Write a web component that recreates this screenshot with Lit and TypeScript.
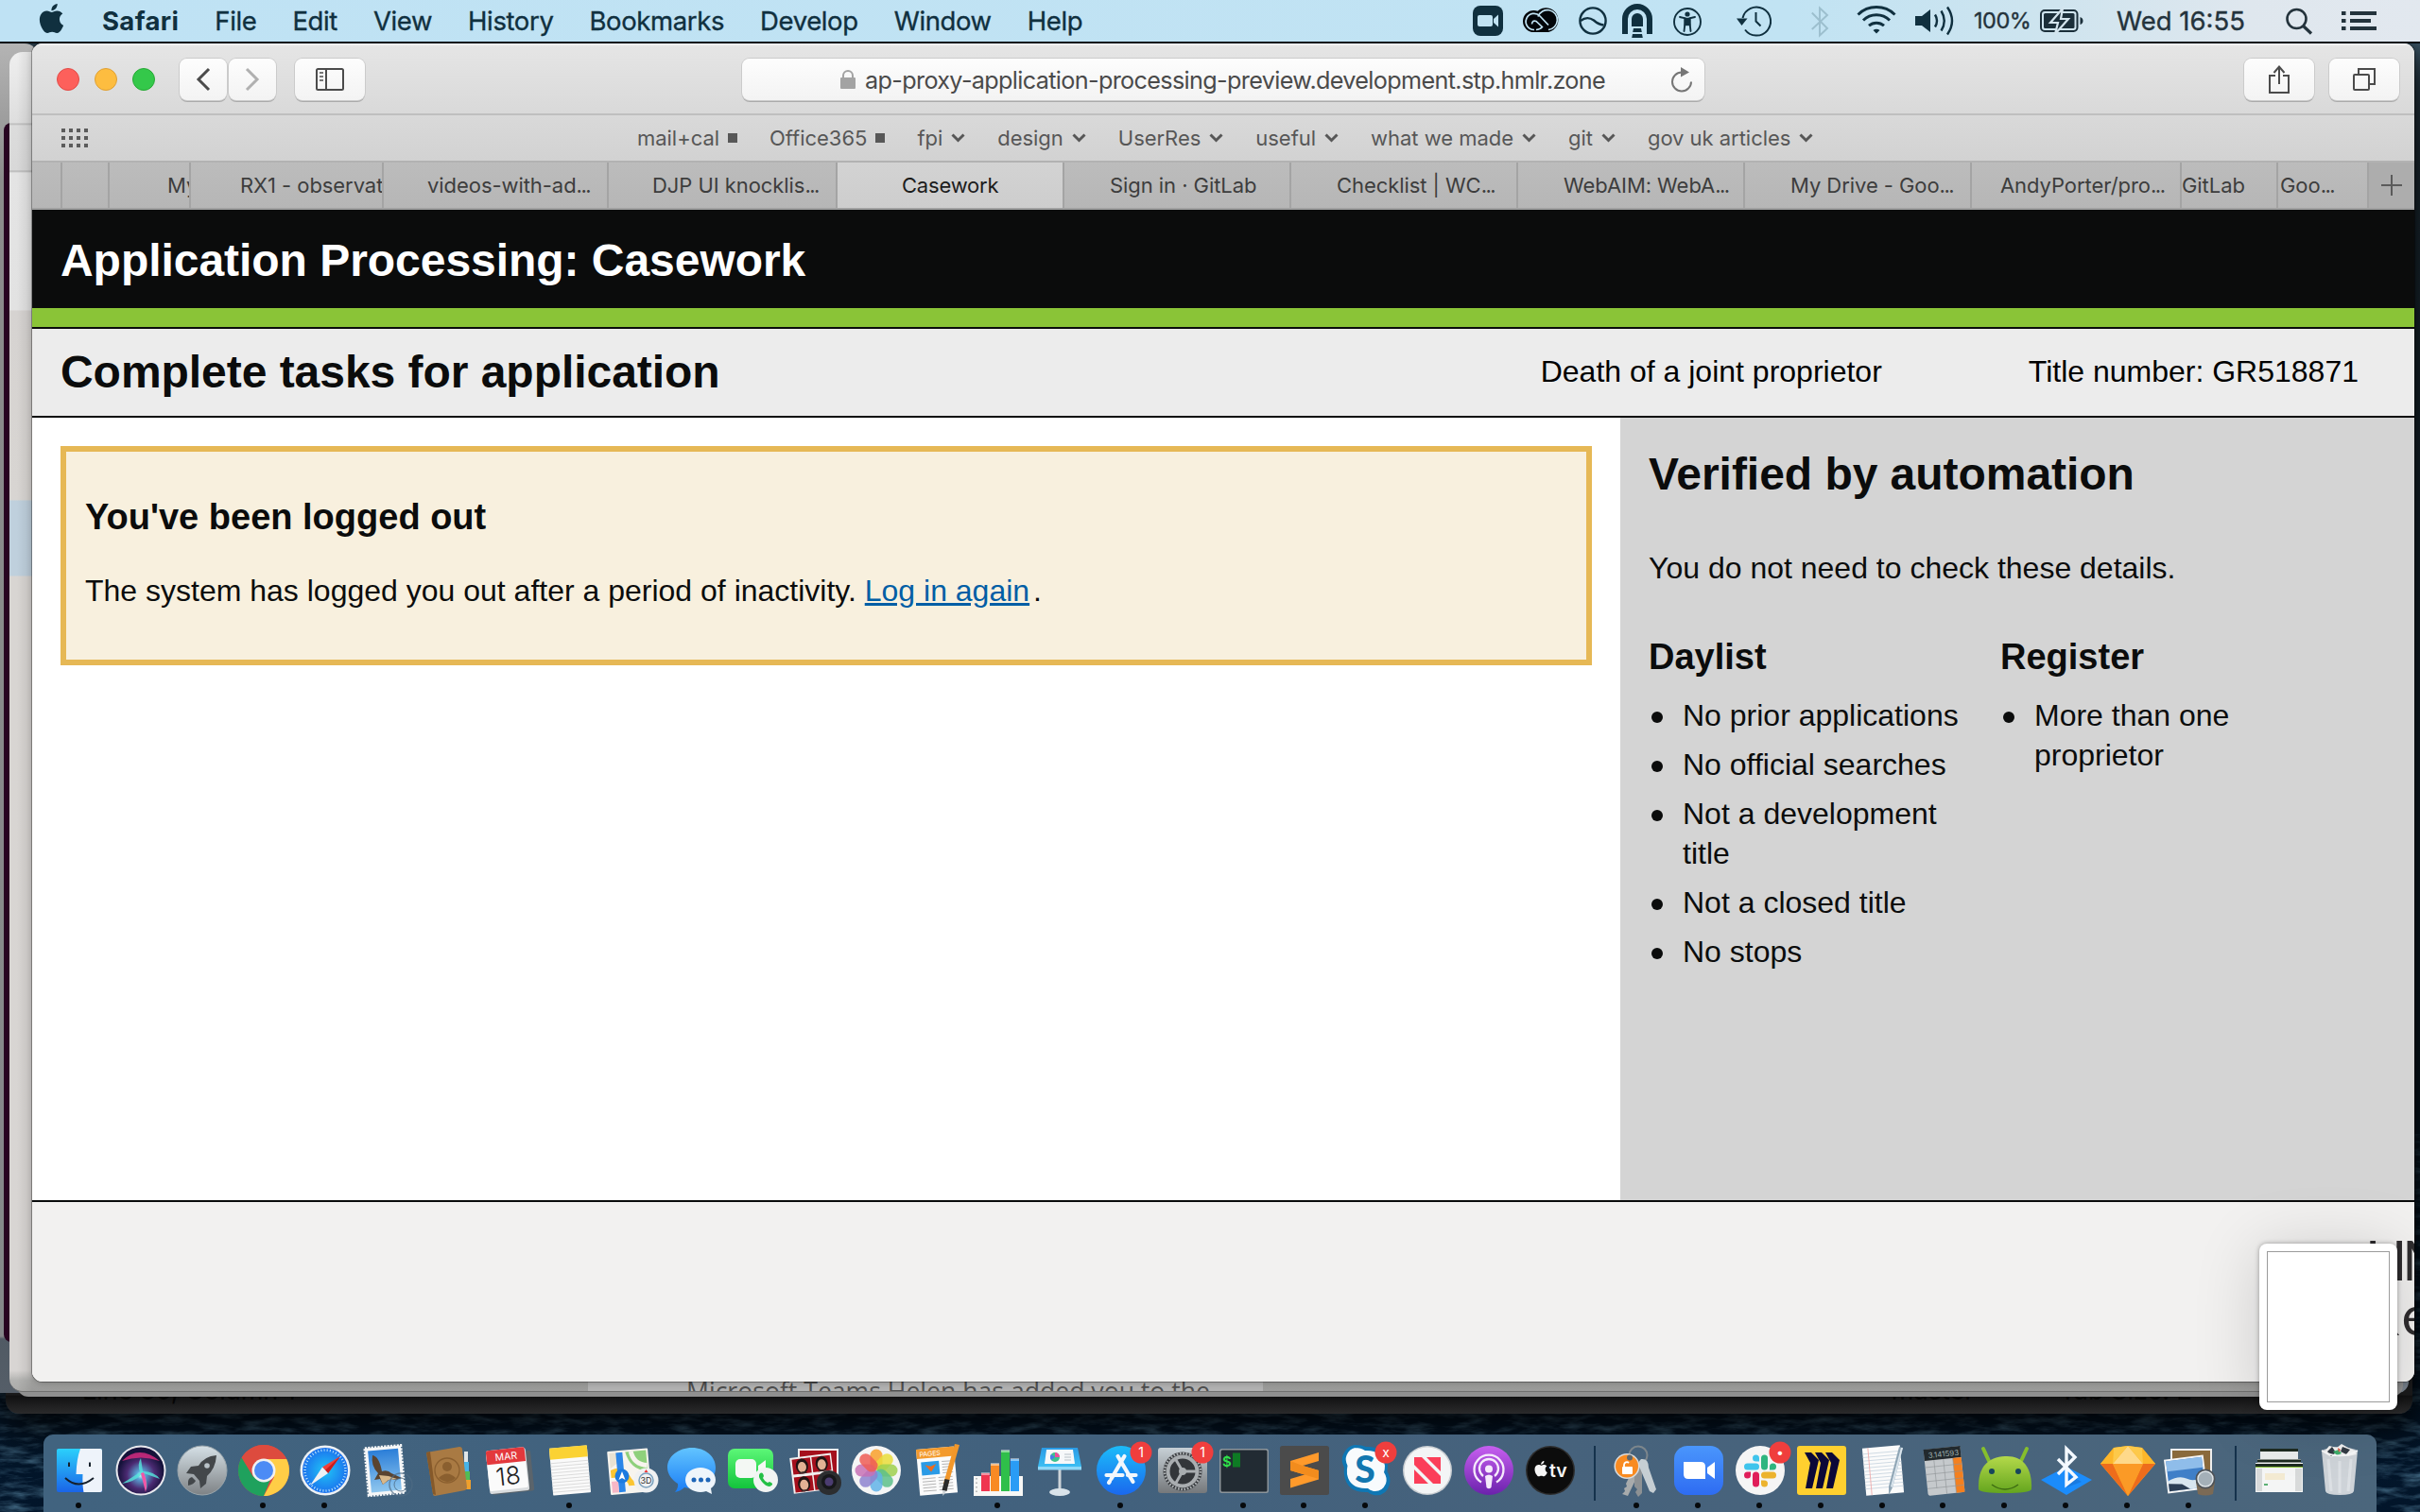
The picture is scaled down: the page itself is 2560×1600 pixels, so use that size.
import { LitElement, html, svg, css, nothing } from "lit";
import { customElement, property } from "lit/decorators.js";

const APPLE =
  "M12.152 6.896c-.948 0-2.415-1.078-3.96-1.04-2.04.027-3.91 1.183-4.961 3.014-2.117 3.675-.546 9.103 1.519 12.09 1.013 1.454 2.208 3.09 3.792 3.039 1.52-.065 2.09-.987 3.935-.987 1.831 0 2.35.987 3.96.948 1.637-.026 2.676-1.48 3.676-2.948 1.156-1.688 1.636-3.325 1.662-3.415-.039-.013-3.182-1.221-3.22-4.857-.026-3.04 2.48-4.494 2.597-4.559-1.429-2.09-3.623-2.324-4.39-2.376-2-.156-3.675 1.09-4.61 1.09zM15.53 3.83c.843-1.012 1.4-2.427 1.245-3.83-1.207.052-2.662.805-3.532 1.818-.78.896-1.454 2.338-1.273 3.714 1.338.104 2.715-.688 3.559-1.701";

/* ---------- menu bar ---------- */

@customElement("menu-bar")
class MenuBar extends LitElement {
  static styles = css`
    :host {
      display: flex;
      height: 44px;
      background: linear-gradient(90deg, #bfe2f4 0%, #c1e3f3 74%, #cde4ef 84%, #dfe7ee 93%, #e2e8ef 100%);
      border-bottom: 2px solid #020a12;
      color: #10303f;
      font: 500 27.5px/44px "Inter", "Liberation Sans", sans-serif;
      white-space: nowrap;
    }
    .apple { width: 31px; height: 31px; margin: 4px 0 0 39px; }
    .menus { display: flex; gap: 38px; margin-left: 38px; width: 1450px; font-weight: 400; letter-spacing: -0.38px; -webkit-text-stroke: 0.35px #10303f; }
    .app { font-weight: 700; letter-spacing: 0.35px; -webkit-text-stroke: 0; }
    .status {
      display: grid;
      grid-template-columns: 53px 59px 46px 54px 67px 79px 48px 62px 62px 70px 81px 179px 59px 37px;
      font-weight: 400;
      -webkit-text-stroke: 0.35px #24333c;
      color: #24333c;
    }
    .status svg { display: block; height: 44px; }
    .pct { font-size: 23.5px; letter-spacing: -0.5px; }
    .clock { letter-spacing: 0; }
  `;
  render() {
    const ink = "#10303f";
    return html`
      <svg class="apple" viewBox="0 0 24 24" fill=${ink}><path d=${APPLE} /></svg>
      <div class="menus">
        <span class="app">Safari</span>
        ${["File", "Edit", "View", "History", "Bookmarks", "Develop", "Window", "Help"].map((m) => html`<span>${m}</span>`)}
      </div>
      <div class="status">
        <svg width="32" viewBox="0 0 32 44">
          <rect y="6" width="32" height="32" rx="8" fill=${ink} />
          <rect x="5" y="16" width="16" height="12" rx="2" fill="#c1e3f3" />
          <path d="M22 20l5-4.500v13l-5-4.500z" fill="#c1e3f3" />
        </svg>
        <svg width="39" viewBox="0 0 39 44" fill="none" stroke="#020509">
          <path d="M11.500 34A11 11 0 0 1 11.500 11q2.500 0 4 .8A13 13 0 1 1 27 34z" fill="#020509" stroke="none" />
          <path d="M12 31.500A8.600 8.600 0 1 1 18 17l9 9.500" stroke="#c1e3f3" stroke-width="1.700" />
          <path d="M27 31.500A10.500 10.500 0 1 0 16 17.500" stroke="#c1e3f3" stroke-width="1.700" />
          <path d="M14 31.500q4 0 7-3.500M9.500 25.500q.5-4.500 4.500-3l7 6.500" stroke="#c1e3f3" stroke-width="1.700" />
        </svg>
        <svg width="30" viewBox="0 0 30 44" fill="none" stroke=${ink} stroke-width="2.400">
          <circle cx="15" cy="22" r="13.600" />
          <path d="M2 22q7-5.500 14-.5 5 4.500 10.500 5" />
        </svg>
        <svg width="32" viewBox="0 0 32 44" fill=${ink}>
          <path d="M0 36V20a16 16 0 0 1 32 0v16h-6V20a10 10 0 0 0-20 0v16z" />
          <path d="M10 28v-8a6 6 0 0 1 12 0v8zM12 30h8l.8 4h-9.600zM11 36h10l.8 4H10.200z" />
        </svg>
        <svg width="30" viewBox="0 0 30 44" fill="none" stroke=${ink} stroke-width="1.900">
          <circle cx="15" cy="23" r="14" />
          <circle cx="15" cy="15" r="2.600" fill=${ink} stroke="none" />
          <path d="M7 18l5.500 1.300v5L11.500 33M23 18l-5.500 1.300v5l1 8.700" stroke-linecap="round" />
          <path d="M11.500 18.800h7v8.400h-7z" fill=${ink} stroke="none" />
        </svg>
        <svg width="37" viewBox="0 0 37 44" fill="none" stroke=${ink} stroke-width="2">
          <path d="M6.500 19A15 15 0 1 1 9 31.500" />
          <path d="M20.500 13v9.500l5 5" />
          <path d="M0 19.500h11.500L5.500 27z" fill=${ink} stroke="none" />
        </svg>
        <svg width="19" viewBox="0 0 19 44" fill="none" stroke="#9cbfce" stroke-width="1.900">
          <path d="M.8 13.500L17 30l-8 7.500v-29l8 7.500L.8 31" />
        </svg>
        <svg width="43" viewBox="0 0 43 44" fill="none" stroke=${ink} stroke-width="3">
          <path d="M1.500 15.500a28 28 0 0 1 39 0M7 21.500a20 20 0 0 1 28 0M13 27.200a12 12 0 0 1 16 0" />
          <path d="M17.500 32q3.500-2.500 7 0L21 35.500z" fill=${ink} stroke="none" />
        </svg>
        <svg width="42" viewBox="0 0 42 44" fill="none" stroke=${ink} stroke-width="2.400">
          <path d="M0 17h7l9-7v24l-9-7H0z" fill=${ink} stroke="none" />
          <path d="M21 15.500q4 6.500 0 13M27.500 11.500q6.500 10.500 0 21M34 7.500q10 14.500 0 29" />
        </svg>
        <span class="pct">100%</span>
        <svg width="48" viewBox="0 0 48 44" fill="none" stroke="#1b2f3a" stroke-width="2">
          <rect x="1" y="11" width="38.500" height="22" rx="4" />
          <rect x="4" y="14" width="32.500" height="16" rx="1.500" fill="#1b2f3a" stroke="none" />
          <path d="M42.500 18q3 1 3 4t-3 4z" fill="#1b2f3a" stroke="none" />
          <path d="M24 9L11 24h8l-3 12L30 20h-8z" fill="#1b2f3a" stroke="#d4e5ee" stroke-width="2.200" />
        </svg>
        <span class="clock">Wed 16:55</span>
        <svg width="30" viewBox="0 0 30 44" fill="none" stroke="#24333c" stroke-width="2.600">
          <circle cx="11.500" cy="20" r="10" /><path d="M18.500 27.500l8.500 8" stroke-width="3.200" />
        </svg>
        <svg width="38" viewBox="0 0 38 44" fill="#24333c">
          <path d="M0 12h4.500v4H0zM0 20h4.500v4H0zM0 28h4.500v4H0zM9 12h28v4H9zM9 20h22v4H9zM9 28h28v4H9z" />
        </svg>
      </div>
    `;
  }
}

/* ---------- Safari chrome ---------- */

interface Bookmark { label: string; folder: boolean; }
const BOOKMARKS: Bookmark[] = [
  { label: "mail+cal", folder: false },
  { label: "Office365", folder: false },
  { label: "fpi", folder: true },
  { label: "design", folder: true },
  { label: "UserRes", folder: true },
  { label: "useful", folder: true },
  { label: "what we made", folder: true },
  { label: "git", folder: true },
  { label: "gov uk articles", folder: true },
];

interface Tab { title: string; width: number; inset: number; cut?: boolean; active?: boolean; }
const TABS: Tab[] = [
  { title: "", width: 32, inset: 0 },
  { title: "", width: 50, inset: 0 },
  { title: "My", width: 86, inset: 61 },
  { title: "RX1 - observat", width: 204, inset: 52 },
  { title: "videos-with-ad", width: 238, inset: 46, cut: true },
  { title: "DJP UI knocklis", width: 242, inset: 46, cut: true },
  { title: "Casework", width: 240, inset: 68, active: true },
  { title: "Sign in · GitLab", width: 240, inset: 48 },
  { title: "Checklist | WC", width: 240, inset: 48, cut: true },
  { title: "WebAIM: WebA", width: 240, inset: 48, cut: true },
  { title: "My Drive - Goo", width: 240, inset: 48, cut: true },
  { title: "AndyPorter/pro", width: 222, inset: 30, cut: true },
  { title: "GitLab", width: 102, inset: 0 },
  { title: "Goo", width: 96, inset: 2, cut: true },
];

@customElement("browser-chrome")
class BrowserChrome extends LitElement {
  static styles = css`
    :host { display: block; font-family: "Inter", "Liberation Sans", sans-serif; white-space: nowrap; }
    .toolbar {
      box-sizing: border-box; height: 76px; display: flex; align-items: center;
      background: linear-gradient(#f6f6f6 0, #e5e5e5 3px, #d9d9d9);
      border-bottom: 2px solid #bfbfbf; padding: 1px 16px 0 26px;
    }
    .lights { display: flex; gap: 16px; margin-right: 26px; }
    .light { width: 24px; height: 24px; border-radius: 50%; box-sizing: border-box; }
    .close { background: #fd605b; border: 1px solid #e24b47; }
    .min { background: #fdbd40; border: 1px solid #dfa034; }
    .max { background: #34c84a; border: 1px solid #27a935; }
    .btn {
      display: flex; align-items: center; justify-content: center; height: 44px; box-sizing: border-box;
      background: linear-gradient(#fdfdfd, #f3f3f3); border-radius: 8px;
      box-shadow: 0 0 0 1px #cbcbcb, 0 2px 0 0 #ababab;
    }
    .nav { width: 50px; margin-right: 2px; }
    .side { width: 74px; margin-left: 18px; }
    .address {
      width: 1018px; margin-left: 399px; font-size: 25.2px; color: #4a4a4a; letter-spacing: -0.65px;
      justify-content: flex-start; box-sizing: border-box; padding-left: 104px;
    }
    .url { padding-top: 2px; }
    .lock { margin-right: 10px; }
    .reload { margin-left: auto; margin-right: 12px; }
    .right { display: flex; gap: 16px; margin-left: auto; }
    .tool { width: 74px; }
    .bookmarks {
      box-sizing: border-box; height: 50px; display: flex; align-items: center; padding-left: 31px;
      background: linear-gradient(#d9d9d9, #d2d2d2); border-bottom: 2px solid #b2b2b2; color: #575757; font-size: 22px; letter-spacing: -0.03px;
    }
    .grid { margin-right: 581px; }
    .links { display: flex; gap: 34px; }
    .link { display: flex; align-items: center; gap: 9px; line-height: 30px; }
    .square { width: 10px; height: 10px; background: #575757; }
    .tabs {
      display: flex; box-sizing: border-box; height: 50px; border-bottom: 2px solid #a0a0a0;
      background: linear-gradient(#bcbcbc, #b6b6b6); color: #3d3d3d; font-size: 22px; line-height: 48px;
    }
    .tab { box-sizing: border-box; overflow: hidden; border-right: 2px solid #a4a4a4; flex: none; letter-spacing: -0.06px; }
    .dots { letter-spacing: -1.5px; }
    .active { background: linear-gradient(#d3d3d3, #cdcdcd); color: #1c1c1c; letter-spacing: -0.2px; }
    .plus { flex: 1; display: flex; align-items: center; justify-content: center; background: #adadad; }
  `;
  render() {
    return html`
      <div class="toolbar">
        <div class="lights"><span class="light close"></span><span class="light min"></span><span class="light max"></span></div>
        <div class="btn nav"><svg width="16" height="26" fill="none" stroke="#4b4b4b" stroke-width="3"><path d="M14 2L3 13l11 11" /></svg></div>
        <div class="btn nav"><svg width="16" height="26" fill="none" stroke="#b0b0b0" stroke-width="3"><path d="M2 2l11 11L2 24" /></svg></div>
        <div class="btn side">
          <svg width="30" height="24" fill="none" stroke="#4b4b4b" stroke-width="2">
            <rect x="1" y="1" width="28" height="22" rx="1.500" /><path d="M11 1v22" /><path d="M4 5h4M4 9h4M4 13h4" stroke="#777" />
          </svg>
        </div>
        <div class="btn address">
          <svg class="lock" width="16" height="20"><rect y="8" width="16" height="12" rx="1" fill="#a3a3a3" /><path d="M3 9V6a5 5 0 0 1 10 0v3" fill="none" stroke="#a3a3a3" stroke-width="2" /></svg>
          <span class="url">ap-proxy-application-processing-preview.development.stp.hmlr.zone</span>
          <svg class="reload" width="24" height="28" fill="none" stroke="#767676" stroke-width="2"><path d="M12 6.500a10 10 0 1 0 10 10" /><path d="M11 1l9 5.500-9 5z" fill="#767676" stroke="none" /></svg>
        </div>
        <div class="right">
          <div class="btn tool"><svg width="24" height="32" fill="none" stroke="#4b4b4b" stroke-width="2"><path d="M8 12H2v18h20V12h-6M12 21V3M6.500 9L12 2.500 17.500 9" /></svg></div>
          <div class="btn tool"><svg width="26" height="26" fill="none" stroke="#4b4b4b" stroke-width="2"><rect x="2" y="8" width="16" height="16" rx="1" /><path d="M7 8V2h17v16h-5" /></svg></div>
        </div>
      </div>
      <div class="bookmarks">
        <svg class="grid" width="28" height="20" fill="#5c5c5c">
          ${[0, 8, 16].map((y) => [0, 8, 16, 24].map((x) => svg`<rect x=${x} y=${y} width="4" height="4"/>`))}
        </svg>
        <div class="links">
          ${BOOKMARKS.map((b) => html`
            <span class="link">${b.label}${b.folder
              ? html`<svg width="15" height="10" fill="none" stroke="#575757" stroke-width="3"><path d="M1.500 1.500l6 6 6-6" /></svg>`
              : html`<span class="square"></span>`}</span>`)}
        </div>
      </div>
      <div class="tabs">
        ${TABS.map((t) => html`<div class="tab ${t.active ? "active" : ""}" style="width:${t.width}px;padding-left:${t.inset}px">${t.title}${t.cut ? html`<span class="dots">...</span>` : nothing}</div>`)}
        <div class="plus"><svg width="24" height="24" stroke="#5b5b5b" stroke-width="2"><path d="M12 1v22M1 12h22" /></svg></div>
      </div>
    `;
  }
}

/* ---------- Casework page ---------- */

@customElement("casework-page")
class CaseworkPage extends LitElement {
  static styles = css`
    :host { display: flex; flex-direction: column; height: 1240px; color: #0b0c0c; font: 32px/42px "Liberation Sans", Arial, sans-serif; }
    h1, h2, h3, p, ul { margin: 0; padding: 0; }
    .banner { box-sizing: border-box; height: 124px; padding: 3px 30px 0; background: #0b0c0c; border-bottom: 20px solid #8ac437; color: #fff; font-size: 48px; font-weight: 700; line-height: 102px; letter-spacing: -0.04px; }
    .heading { box-sizing: border-box; height: 96px; display: flex; align-items: center; border: solid #0b0c0c; border-width: 2px 0; background: #ececec; padding: 0 59px 0 30px; line-height: 92px; }
    .title { font-size: 48px; margin-right: auto; letter-spacing: -0.04px; }
    .meta { color: #000; padding-bottom: 2px; }
    .kind { margin-right: 155px; }
    .main { display: flex; height: 828px; background: #fff; }
    .content { flex: 1; padding: 30px; }
    .alert { box-sizing: border-box; height: 232px; border: 6px solid #e6b855; background: #f8f0de; padding: 44px 20px; }
    .alert h2 { font-size: 38px; line-height: 50px; margin-bottom: 32px; }
    a { color: #005ea5; text-decoration: underline; margin-right: 4px; }
    .aside { box-sizing: border-box; width: 840px; background: #d4d4d4; padding: 35px 30px; }
    .aside h2 { font-size: 48px; line-height: 50px; margin-bottom: 53px; letter-spacing: -0.04px; }
    .cols { display: grid; grid-template-columns: 372px 372px; margin-top: 48px; }
    h3 { font-size: 38px; line-height: 50px; margin-bottom: 16px; }
    ul { list-style: none; padding-right: 30px; }
    li { display: grid; grid-template-columns: 36px 1fr; margin-bottom: 10px; }
    .dot { width: 12px; height: 12px; border-radius: 50%; background: #0b0c0c; margin: 17px 0 0 3px; }
    .footer { flex: 1; background: #f2f1f0; border-top: 2px solid #0b0c0c; display: flex; justify-content: flex-end; overflow: hidden; }
    .logo { width: 52px; padding-top: 32px; font: 58px/58px "Lato", sans-serif; color: #2f2d2f; white-space: nowrap; }
    .logo div:first-child { letter-spacing: -5px; }
    .logo div:last-child { letter-spacing: 4px; }
  `;
  list(title: string, items: string[]) {
    return html`<section><h3>${title}</h3><ul>${items.map((i) => html`<li><span class="dot"></span><span>${i}</span></li>`)}</ul></section>`;
  }
  render() {
    return html`
      <div class="banner">Application Processing: Casework</div>
      <div class="heading">
        <h1 class="title">Complete tasks for application</h1>
        <span class="meta kind">Death of a joint proprietor</span>
        <span class="meta">Title number: GR518871</span>
      </div>
      <div class="main">
        <div class="content">
          <div class="alert">
            <h2>You've been logged out</h2>
            <p>The system has logged you out after a period of inactivity. <a>Log in again</a>.</p>
          </div>
        </div>
        <div class="aside">
          <h2>Verified by automation</h2>
          <p>You do not need to check these details.</p>
          <div class="cols">
            ${this.list("Daylist", ["No prior applications", "No official searches", "Not a development title", "Not a closed title", "No stops"])}
            ${this.list("Register", ["More than one proprietor"])}
          </div>
        </div>
      </div>
      <div class="footer"><div class="logo"><div>HM</div><div>Re</div></div></div>
    `;
  }
}

/* ---------- dock ---------- */

const range = (n: number) => Array.from({ length: n }, (_, i) => i);

const ICONS: Record<string, unknown> = {
  finder: svg`
    <defs><linearGradient id="fi" x2="0" y2="1"><stop stop-color="#2bd0fb"/><stop offset="1" stop-color="#1a64e8"/></linearGradient></defs>
    <rect x="8" y="9" width="48" height="46" rx="2" fill="url(#fi)"/>
    <path d="M33 9h21q2 0 2 2v42q0 2-2 2H36.500q-1.500-8-1-19H28.500Q29 20 33 9z" fill="#eef3fa"/>
    <path d="M17 40q14 13 30 0M21 23.500v4.500M43 23.500v4.500" fill="none" stroke="#15202c" stroke-width="2"/>`,
  siri: svg`
    <defs><radialGradient id="si" cy=".6"><stop stop-color="#e8ffff"/><stop offset=".18" stop-color="#5aa8d8"/><stop offset=".6" stop-color="#4b2a72"/><stop offset="1" stop-color="#15123a"/></radialGradient></defs>
    <circle cx="32" cy="32" r="26.500" fill="#e9e9ee"/><circle cx="32" cy="32" r="24.500" fill="url(#si)"/>
    <path d="M12 22q18-18 40 0-20-7-40 0z" fill="#d22a7e" opacity=".85"/>
    <path d="M31 34L12 46q13-2 20-9l6 16q2-7-3-18l17 6q-6-8-18-8l-2-14q-4 6-1 15z" fill="#54e6dc" opacity=".8"/>
    <path d="M32 35l5 20q3-9-2-21z" fill="#f256a6"/>`,
  launchpad: svg`
    <defs><linearGradient id="la" x2="0" y2="1"><stop stop-color="#d5e0e6"/><stop offset="1" stop-color="#7e8285"/></linearGradient></defs>
    <circle cx="32" cy="32" r="26" fill="url(#la)" stroke="#9aa5ab"/>
    <path d="M47 16q-13 1-19 11l-8 1-5 7 8 1 6 7 1 8 6-5 1-8q9-8 10-22z" fill="#43474a"/><circle cx="37" cy="27" r="2.800" fill="#b9c3c8"/>
    <path d="M17 48q-1-8 4-9l4 4q-2 4-8 5z" fill="#43474a"/>`,
  chrome: svg`
    <circle cx="32" cy="32" r="27" fill="#dd4b3e"/>
    <path d="M32 32L8.600 18.500A27 27 0 0 0 32 59l8-20z" fill="#1fa15d"/>
    <path d="M32 20h24.200A27 27 0 0 1 32 59l11-20z" fill="#ffcd46"/>
    <path d="M32 20h24.200A27 27 0 0 0 8.600 18.500L21 39z" fill="#dd4b3e"/>
    <circle cx="32" cy="32" r="12.500" fill="#f1f1f1"/><circle cx="32" cy="32" r="10" fill="#4c8bf5"/>`,
  safari: svg`
    <defs><radialGradient id="sa"><stop stop-color="#20c5f6"/><stop offset="1" stop-color="#1b72ee"/></radialGradient></defs>
    <circle cx="32" cy="32" r="26.500" fill="#eef1f4"/><circle cx="32" cy="32" r="24" fill="url(#sa)"/>
    <circle cx="32" cy="32" r="21.500" fill="none" stroke="#bfe6fb" stroke-width="2.500" stroke-dasharray="1 2.200"/>
    <path d="M48 17L29 28.500l6 6.500z" fill="#f0403a"/><path d="M48 17L35 35l-3-3.300z" fill="#c81c1c"/>
    <path d="M16 48l13-19.500 6 6.500z" fill="#eef1f4"/>`,
  mail: svg`
    <defs><linearGradient id="ma" x2="0" y2="1"><stop stop-color="#2b7ed8"/><stop offset="1" stop-color="#8fc7ef"/></linearGradient></defs>
    <g transform="rotate(-5 32 32)">
      <rect x="12" y="7" width="38" height="50" fill="none" stroke="#f6f7f8" stroke-width="3" stroke-dasharray="2.200 1.200"/>
      <rect x="12" y="7" width="38" height="50" fill="#f6f7f8"/><rect x="15" y="10" width="32" height="44" fill="url(#ma)"/>
    </g>
    <path d="M18 16q7 1 10 17 6-2 10 2l11 5q-6 3-12 1l-8 6-3-6-6 1 4-7q-8-8-6-19z" fill="#5a4430"/>
    <path d="M25 37l10 1 9 3-9 1-6 5z" fill="#d8b88a"/>
    <circle cx="48" cy="47" r="12" fill="none" stroke="#4e6b85" stroke-width="1.500" opacity=".7"/><circle cx="48" cy="47" r="7" fill="none" stroke="#4e6b85" opacity=".8"/>`,
  contacts: svg`
    <path d="M50 12h4v11h-4z" fill="#dfe6ea"/><path d="M50 23h5v10h-5z" fill="#46b4e8"/><path d="M50 33h6v9h-6z" fill="#52bd54"/><path d="M50 42h7v10h-7z" fill="#f0a02c"/>
    <path d="M10 13L45 7q3 0 3 3l5 40q0 2-2 3l-32 6q-2 0-2-2z" fill="#a97a43"/><path d="M10 13l7 44 3 1L14 12z" fill="#85592a"/>
    <circle cx="32" cy="32" r="13" fill="none" stroke="#8a5f2f" stroke-width="1.300"/><circle cx="32" cy="28" r="5" fill="#8a5f2f"/><path d="M23 40q9-9 18 0-8 8-18 0z" fill="#8a5f2f"/>`,
  calendar: svg`
    <g transform="rotate(-6 32 32)">
      <rect x="12" y="13" width="45" height="43" rx="2" fill="#5b646b"/>
      <rect x="10" y="10" width="42" height="45" rx="2" fill="#d9dcde"/><rect x="10" y="9" width="41" height="43" rx="2" fill="#fbfbfb"/>
      <path d="M10 24V11q0-2 2-2h37q2 0 2 2v13z" fill="#e3383c"/>
      <text x="31" y="20.500" text-anchor="middle" font-size="10.500" fill="#fff">MAR</text>
      <text x="31" y="47" text-anchor="middle" font-size="26" font-weight="300" fill="#222">18</text>
    </g>`,
  notes: svg`
    <g transform="rotate(-5 32 32)"><rect x="12" y="7" width="40" height="50" rx="1" fill="#fafafa"/><rect x="12" y="7" width="40" height="12" fill="#fbd233"/>
    ${range(10).map((i) => svg`<path d="M12 ${23 + i * 3.400}h40" stroke="#d9d9d9" stroke-width=".9"/>`)}</g>`,
  maps: svg`
    <g transform="rotate(-5 32 32)"><rect x="8" y="10" width="43" height="46" rx="1" fill="#f7f4ee"/>
    <path d="M10 12h13v8L10 28z" fill="#e9e2d2"/><path d="M27 12h22v22q-18-2-22-22z" fill="#8fd07c"/><path d="M33 12q2 14 16 16" fill="none" stroke="#f7f4ee" stroke-width="5"/>
    <path d="M10 30q14-6 20 8t19 4v6H28q-2-10-18-10z" fill="#fbc531"/><path d="M17 12h7v42h-7z" fill="#2b86e8"/><path d="M10 42h7v12h-7z" fill="#f6b7c6"/></g>
    <circle cx="22" cy="38" r="7.500" fill="#1c7be0"/><path d="M22 33l3.500 9-3.500-2-3.500 2z" fill="#fff"/>
    <circle cx="47.500" cy="42.500" r="13" fill="#f0f1f2"/><circle cx="47.500" cy="42.500" r="7.500" fill="none" stroke="#7aa0bd" stroke-width="1.500"/><text x="47.500" y="46" text-anchor="middle" font-size="9" fill="#333">3D</text><path d="M47.500 31l2 3h-4z" fill="#e33"/>`,
  messages: svg`
    <defs><linearGradient id="me" x2="0" y2="1"><stop stop-color="#62c4ff"/><stop offset="1" stop-color="#1a7df5"/></linearGradient></defs>
    <path d="M32 8c14 0 25 9 25 21S46 51 32 51q-4 0-8-1-4 4-10 5 4-5 3-9C11 42 6 36 6 29 6 17 18 8 32 8z" fill="url(#me)"/>
    <path d="M41 29c8 0 16 5 16 13 0 4-2 7-5 9l1 6-6-3q-3 1-6 1c-8 0-16-5-16-13s8-13 16-13z" fill="#eef5fb"/>
    <g fill="#1d65b8"><circle cx="34" cy="42" r="2.500"/><circle cx="41.500" cy="42" r="2.500"/><circle cx="49" cy="42" r="2.500"/></g>`,
  facetime: svg`
    <defs><linearGradient id="fa" x2="0" y2="1"><stop stop-color="#5cf777"/><stop offset="1" stop-color="#13c33c"/></linearGradient></defs>
    <rect x="5" y="9" width="48" height="42" rx="7" fill="url(#fa)"/><rect x="13" y="20" width="22" height="20" rx="5" fill="#f4f8f4"/><path d="M37 27l8-6v18l-8-6z" fill="#f4f8f4"/>
    <circle cx="45" cy="42" r="13" fill="#f2f4f3"/><path d="M39 35q3-2 4 3l-1 2q2 4 5 5l2-1q5 2 2 4-4 3-10-4-5-6-2-9z" fill="#24c046"/>`,
  photobooth: svg`
    <g transform="translate(14 9)"><rect width="43" height="35" fill="#eee"/><rect x="2" y="2" width="39" height="31" fill="#a50f1c"/></g>
    <g transform="rotate(-7 30 32)"><rect x="7" y="16" width="44" height="38" fill="#f0eeee"/>
    ${[[9, 18], [30, 18], [9, 37], [30, 37]].map(([x, y]) => svg`<g transform="translate(${x} ${y})"><rect width="19.500" height="16" fill="#a50f1c"/><ellipse cx="10" cy="8" rx="6.500" ry="8" fill="#211414"/><ellipse cx="10" cy="9" rx="4.500" ry="5.500" fill="#e2b194"/><path d="M5 16q5-4 10 0z" fill="#3b2a2a"/></g>`)}</g>
    <circle cx="47" cy="45" r="13" fill="#2c2e30"/><circle cx="47" cy="44" r="8" fill="#17181b"/><circle cx="47" cy="44" r="4.500" fill="#4b3c70"/>`,
  photos: svg`
    <circle cx="32" cy="32" r="26" fill="#f5f5f5"/>
    ${["#f9a02a", "#e9dd3a", "#9fd04e", "#5dbf8a", "#62b3e8", "#8d83cf", "#c771b5", "#ee5d55"].map((c, i) => svg`<rect x="25.500" y="9.500" width="13" height="22" rx="6.500" fill=${c} opacity=".85" transform="rotate(${i * 45} 32 32)"/>`)}`,
  pages: svg`
    <g transform="rotate(-5 32 32)"><rect x="11" y="8" width="40" height="49" fill="#fbfbfb"/><rect x="11" y="8" width="40" height="10" fill="#f39a2c"/>
    <text x="14" y="16" font-size="7" fill="#fff">PAGES</text><rect x="15" y="22" width="19" height="14" fill="#2b9be6"/><path d="M25 33l-6-8 6 2 6-2z" fill="#ef6b1d"/>
    ${range(5).map((i) => svg`<path d="M37 ${23 + i * 3}h11" stroke="#b5b5b5"/>`)}
    ${range(5).map((i) => svg`<path d="M15 ${39.500 + i * 3.300}h14M32 ${39.500 + i * 3.300}h15" stroke="#b5b5b5"/>`)}</g>
    <path d="M50 4l5 1-12 42-5-1z" fill="#f2972a"/><path d="M39.500 41l5 1-3 12-5-1z" fill="#2b2b2b"/><path d="M37 53l4 1-3.500 5z" fill="#cfd4d8"/>`,
  numbers: svg`
    <path d="M6 38h52v21H6z" fill="#f7f7f5"/><path d="M9 40v16" stroke="#bbb" stroke-width="2" stroke-dasharray="1.500 3"/>
    <rect x="14" y="35" width="9" height="19" fill="#ef3550"/><rect x="24" y="25" width="9" height="29" fill="#f88a24"/><rect x="35" y="11" width="9" height="43" fill="#2fbf4a"/><rect x="45" y="20" width="9" height="34" fill="#2a9cf5"/>
    <path d="M14 34h9v3h-9zM24 24h9v3h-9zM35 10h9v3h-9zM45 19h9v3h-9z" fill="#fff" opacity=".45"/>`,
  keynote: svg`
    <defs><linearGradient id="ke" x2="0" y2="1"><stop stop-color="#2a9be6"/><stop offset="1" stop-color="#3fc3f5"/></linearGradient></defs>
    <rect x="30.500" y="30" width="3" height="24" fill="#cdd4d9"/><ellipse cx="32" cy="55" rx="11" ry="4" fill="#d9e3ea"/>
    <path d="M13 8h38l4 20v3H9v-3z" fill="url(#ke)"/><path d="M9 28h46v3.500H9z" fill="#8fd8f8"/>
    <path d="M18 10h28l2 15H16z" fill="#f6f8fa"/><circle cx="27" cy="18" r="5" fill="#3ec28f"/><path d="M27 18v-5a5 5 0 0 1 5 5z" fill="#ef4d9a"/><path d="M27 18l-4 3a5 5 0 0 1 0-6z" fill="#4a7de8"/><path d="M37 15h7M37 18h7M37 21h7" stroke="#b8c1c7"/>`,
  appstore: svg`
    <defs><linearGradient id="as" x2="0" y2="1"><stop stop-color="#1cbcf9"/><stop offset="1" stop-color="#1a68ee"/></linearGradient></defs>
    <circle cx="32" cy="32" r="26" fill="url(#as)"/>
    <path d="M35.500 17L21.500 41M28.500 17l16 27M16.500 37h17M39 37h8.500M20 43.500l-1 1.500" stroke="#f2f7fc" stroke-width="4.200" stroke-linecap="round" fill="none"/>`,
  settings: svg`
    <defs><linearGradient id="se" x2="0" y2="1"><stop stop-color="#c7d0d6"/><stop offset="1" stop-color="#75787b"/></linearGradient></defs>
    <rect x="6" y="8" width="52" height="48" rx="3" fill="url(#se)"/><circle cx="32" cy="33" r="20.500" fill="#33363a"/>
    <circle cx="32" cy="33" r="19" fill="none" stroke="#a9adb0" stroke-width="2.500" stroke-dasharray="1.800 1.500"/>
    <circle cx="32" cy="33" r="15.500" fill="none" stroke="#a9adb0" stroke-width="4"/><circle cx="32" cy="33" r="4" fill="#a9adb0"/>
    <path d="M32 33h15M32 33l-7.500-13M32 33l-7.500 13" stroke="#a9adb0" stroke-width="3"/>`,
  terminal: svg`<rect x="6" y="9" width="52" height="47" rx="2.500" fill="#8c959b"/><rect x="7.500" y="10.500" width="49" height="44" rx="1.500" fill="#222b33"/>
    <text x="9" y="28" font-size="15" font-weight="600" fill="#2fe04a">$</text><rect x="20" y="13.500" width="8" height="15" fill="#0e7a24"/>`,
  sublime: svg`<rect x="6" y="6" width="52" height="52" rx="2.500" fill="#4b4b4b"/>
    <path d="M47 13L17 22v10l30 9v-9l-17-5 17-5z" fill="#ff9a2b"/><path d="M17 50.500l30-9V32L17 41z" fill="#ff9a2b"/><path d="M17 22v10l30 9v-9l-17-5z" fill="#f28c1d"/>`,
  skype: svg`
    <path d="M20 5q8 0 12 2 20-1 23 19 0 4-.5 7 4 6 2.500 14-4 13-17 11-4-1-6-3-22 1-25-18-.5-5 0-8-4-8-1-14 4-9 12-10z" fill="#0f77b4"/>
    <path d="M20 8q7 0 11 3 18-1 21 16 0 4-1 7 4 6 2 12-4 9-13 8-4-1-6-3-19 1-22-15-.5-5 .5-9-3-6-1-11 3-7 9-8z" fill="#f8fbfd"/>
    <text x="31" y="45" text-anchor="middle" font-family="Lato" font-size="39" font-weight="900" fill="#1277b0">S</text>`,
  news: svg`<circle cx="32" cy="32" r="26" fill="#c9ced2"/><circle cx="32" cy="32" r="24.500" fill="#f3f5f6"/>
    <path d="M18 18h8l20 20v8h-8L18 26z" fill="#fb3e59"/><path d="M31 18h15v15zM18 31v15h15z" fill="#fb3e59"/>`,
  podcasts: svg`
    <defs><linearGradient id="po" x2="0" y2="1"><stop stop-color="#c75ff0"/><stop offset="1" stop-color="#6b22ac"/></linearGradient></defs>
    <circle cx="32" cy="32" r="26" fill="url(#po)"/>
    <g fill="none" stroke="#f5eafb" stroke-width="2.300"><path d="M24 44.500a15.500 15.500 0 1 1 16 0"/><path d="M26 38a10 10 0 1 1 12 0"/></g><circle cx="32" cy="30.500" r="4" fill="#f5eafb"/><path d="M28 38q4-3 8 0l-1.500 12q-2.500 2.500-5 0z" fill="#f5eafb"/>`,
  tv: svg`<circle cx="32" cy="32" r="26" fill="#2d2d2d"/><circle cx="32" cy="32" r="24.500" fill="#0c0c0c"/>
    <path d=${APPLE} transform="translate(14 22) scale(.68)" fill="#f5f5f5"/><text x="31" y="38.500" font-size="19.500" font-weight="600" fill="#f5f5f5">tv</text>`,
  keys: svg`
    <circle cx="33" cy="16" r="9.500" fill="none" stroke="#7d868c" stroke-width="2"/>
    <path d="M28 30l6 4-12 25-6-2 3-3-1-3 3-2-1-3z" fill="#a8abac"/><path d="M29 28h8v28l-4 4-3-5 2-3-3-3z" fill="#8d9194"/><path d="M36 20q8-1 8 9l8 23-3 4-4-2-10-24q-4-6 1-10z" fill="#c6ced3"/>
    <circle cx="21" cy="27.500" r="13.500" fill="#d9dcde"/><circle cx="21" cy="27.500" r="12" fill="#f98b21"/><rect x="16" y="28" width="11" height="8" rx="1" fill="#fff"/><path d="M18 28v-2a3 3 0 0 1 5-2" fill="none" stroke="#fff" stroke-width="1.800"/><circle cx="24" cy="18.500" r="3" fill="#5d666c"/>`,
  zoom: svg`
    <defs><linearGradient id="zo" x2="0" y2="1"><stop stop-color="#4a96fc"/><stop offset="1" stop-color="#2e6cf2"/></linearGradient></defs>
    <rect x="6" y="6" width="52" height="52" rx="14" fill="url(#zo)"/><path d="M16 23h18q5 0 5 5v13H21q-5 0-5-5z" fill="#fff"/><path d="M41 29l8-6v18l-8-6z" fill="#fff"/>`,
  slack: svg`
    <circle cx="32" cy="32" r="26" fill="#f5f5f5"/>
    <rect x="15" y="24.500" width="16" height="7" rx="3.500" fill="#3fc4ec"/><path d="M31 22.500h-3.500a3.500 3.500 0 1 1 3.500-3.500z" fill="#3fc4ec"/>
    <rect x="33" y="15.500" width="7" height="16" rx="3.500" fill="#2fb57f"/><path d="M42 31.500v-3.500a3.500 3.500 0 1 1 3.500 3.500z" fill="#2fb57f"/>
    <rect x="33" y="33.500" width="16" height="7" rx="3.500" fill="#ecb32e"/><path d="M33 42.500h3.500a3.500 3.500 0 1 1-3.500 3.500z" fill="#ecb32e"/>
    <rect x="24" y="33.500" width="7" height="16" rx="3.500" fill="#e01e5a"/><path d="M22 33.500V37a3.500 3.500 0 1 1-3.500-3.500z" fill="#e01e5a"/>`,
  miro: svg`<rect x="6" y="6" width="52" height="52" rx="3" fill="#ffd02f"/>
    ${[0, 11, 22].map((x) => svg`<path d="M${14 + x} 13h7l8 8-7 30h-7l5-27z" fill="#0b0838"/>`)}`,
  textedit: svg`
    <g transform="rotate(-5 32 32)"><rect x="12" y="7" width="40" height="50" fill="#fbfbfb"/>${range(11).map((i) => svg`<path d="M12 ${13 + i * 3.700}h40" stroke="#c6d4de" stroke-width=".8"/>`)}<path d="M18 7v50" stroke="#f0a5a5" stroke-width=".8"/></g>
    <path d="M49 7l4 1-11 42-4 8 0-9z" fill="#8fa5b5"/><path d="M51 8l2 0-11 42-2-1z" fill="#d9e4ec"/>`,
  calculator: svg`
    <g transform="rotate(-6 32 32)"><rect x="13" y="8" width="39" height="49" rx="2" fill="#c5c9cc"/><rect x="13" y="8" width="39" height="12" fill="#22292d"/><text x="50" y="17.500" text-anchor="end" font-size="8" fill="#9fb0b0">3.141593</text>
    <rect x="43" y="20" width="9" height="37" fill="#f4801f"/>
    ${range(4).map((i) => svg`<path d="M13 ${27 + i * 7.500}h39" stroke="#8f9396" stroke-width=".6"/>`)}<path d="M23 20v30M33 20v37M43 20v37" stroke="#8f9396" stroke-width=".6"/></g>`,
  android: svg`
    <defs><linearGradient id="an" x2="0" y2="1"><stop stop-color="#b4d94a"/><stop offset="1" stop-color="#64a51e"/></linearGradient></defs>
    <path d="M15 22L9 9M49 22l6-13" stroke="#86bf2c" stroke-width="4" stroke-linecap="round"/>
    <path d="M4 52C3 28 14 18 32 17s29 11 28 35q-2 4-28 4T4 52z" fill="url(#an)"/>
    <circle cx="18" cy="33" r="3" fill="#17465c"/><circle cx="46" cy="33" r="3" fill="#17465c"/><path d="M18 47q14 10 28 0" fill="none" stroke="#3d6b12" stroke-width="1.500"/>`,
  bluetooth: svg`
    <path d="M32 28L59 42 32 58 5 42z" fill="#1b8cfb"/><path d="M35 37L48 44 32 50z" fill="#1568c8" opacity=".5"/>
    <path d="M23 20l19 19-10 8V9l9 9-18 18" fill="none" stroke="#f4f9ff" stroke-width="3.400"/>`,
  sketch: svg`
    <path d="M17 8l15-2 15 2 14 17-29 34L3 25z" fill="#fdad1d"/><path d="M17 8L3 25h13zM47 8l14 17H48z" fill="#fdb62a"/><path d="M32 6L16 25h32z" fill="#fed98a"/><path d="M17 8l15-2-16 19zM47 8L32 6l16 19z" fill="#fdc94a"/>
    <path d="M3 25h13l16 34z" fill="#ee6c1c"/><path d="M61 25H48L32 59z" fill="#ee6c1c"/><path d="M16 25h32L32 59z" fill="#fb9a26"/>`,
  preview: svg`
    <rect x="12" y="9" width="44" height="36" fill="#eee"/><rect x="14" y="11" width="40" height="32" fill="#8a6a3c"/>
    <g transform="rotate(-7 28 36)"><rect x="7" y="18" width="42" height="36" fill="#f5f5f5"/><rect x="9" y="20" width="38" height="32" fill="#3f7fc8"/><rect x="9" y="20" width="38" height="11" fill="#8fbdea"/><path d="M9 41q12-5 20 0t18-2v13H9z" fill="#d9e6ef"/><path d="M9 44l14 2 8 6H9z" fill="#2c3e55"/></g>
    <path d="M39 44h20l-2 13q-8 3-16 0z" fill="#7b6a55"/><circle cx="49" cy="41" r="10.500" fill="#4d5257"/><circle cx="49" cy="41" r="8" fill="#a4b0b8" stroke="#dfe5e8" stroke-width="1.500"/>`,
  minimised: svg`
    <g><rect x="12" y="9" width="40" height="20" fill="#e9ecec"/><path d="M12 10.500h40" stroke="#1d2a20" stroke-width="3"/></g>
    <rect x="9" y="20" width="46" height="16" fill="#f4f5f5"/><path d="M9 22h46" stroke="#1d2a20" stroke-width="3"/>
    <rect x="7" y="24" width="50" height="31" fill="#f4f5f5"/><path d="M7 26.500h50" stroke="#1d2a20" stroke-width="3"/><path d="M7 28.500h50" stroke="#8ac437"/><path d="M8 30h6v24H8zM49 30h7v24h-7z" fill="#d8dada"/><path d="M17 35h21v7H17z" fill="#f3ead2"/><path d="M16 47h4" stroke="#2a9a4a" stroke-width="1.500"/>`,
  trash: svg`
    <path d="M13 11q19-8 38 0l-4 43q-1 4-15 4t-15-4z" fill="#d9dcdf" opacity=".92"/>
    <path d="M15 13l6-7 8 2 5-4 7 4 7 3 2 4-9 2-10-2-8 3z" fill="#f1f1f1"/><path d="M19 12l5-5 4 6-5 4zM35 7l8 3-4 5-6-3z" fill="#333b44"/><path d="M25 12l4 4 5-2-3-4z" fill="#3fae6b"/><path d="M30 8l3 2-2 3z" fill="#dc5546"/>
    <path d="M13 11q19 11 38 0" fill="none" stroke="#f7f8f9" stroke-width="1.500"/><path d="M20 20l3 34M44 20l-3 34M32 22v34" stroke="#f3f5f6" stroke-width="3" opacity=".4"/>`,
};

interface DockItem { icon: string; running?: boolean; badge?: string; }
const APPS: DockItem[] = [
  { icon: "finder", running: true }, { icon: "siri" }, { icon: "launchpad" }, { icon: "chrome", running: true },
  { icon: "safari", running: true }, { icon: "mail" }, { icon: "contacts" }, { icon: "calendar" },
  { icon: "notes", running: true }, { icon: "maps" }, { icon: "messages" }, { icon: "facetime" },
  { icon: "photobooth" }, { icon: "photos" }, { icon: "pages" }, { icon: "numbers", running: true },
  { icon: "keynote" }, { icon: "appstore", running: true, badge: "1" }, { icon: "settings", badge: "1" },
  { icon: "terminal", running: true }, { icon: "sublime", running: true }, { icon: "skype", running: true, badge: "x" },
  { icon: "news" }, { icon: "podcasts" }, { icon: "tv" },
];
const RECENT: DockItem[] = [
  { icon: "keys", running: true }, { icon: "zoom", running: true }, { icon: "slack", running: true, badge: "•" },
  { icon: "miro", running: true }, { icon: "textedit", running: true }, { icon: "calculator", running: true },
  { icon: "android", running: true }, { icon: "bluetooth", running: true }, { icon: "sketch", running: true },
  { icon: "preview", running: true },
];
const STACKS: DockItem[] = [{ icon: "minimised" }, { icon: "trash" }];

@customElement("dock-icon")
class DockIcon extends LitElement {
  @property() icon = "finder";
  @property() badge = "";
  @property({ type: Boolean }) running = false;
  static styles = css`
    :host { display: flex; flex-direction: column; align-items: center; flex: 1; font-family: "Inter", sans-serif; }
    .art { display: block; width: 64px; height: 64px; margin-top: 6px; overflow: visible; }
    .dot { width: 6px; height: 6px; margin: 2px 2px 0 0; border-radius: 50%; background: #06090c; }
  `;
  render() {
    return html`
      <svg class="art" viewBox="0 0 64 64">
        ${ICONS[this.icon]}
        ${this.badge
          ? svg`<circle cx="53" cy="13" r="11.500" fill="#f03e3d"/><text x="53" y="18" text-anchor="middle" font-size="14" fill="#fff">${this.badge}</text>`
          : nothing}
      </svg>
      ${this.running ? html`<span class="dot"></span>` : nothing}
    `;
  }
}

@customElement("app-dock")
class AppDock extends LitElement {
  static styles = css`
    :host {
      display: flex; box-sizing: border-box; height: 82px; padding-left: 6px; border-radius: 10px 10px 0 0;
      background: linear-gradient(90deg, #41637f 0%, #42617d 45%, #46627c 65%, #4b667c 100%);
    }
    .apps { display: flex; width: 1620px; }
    .recent { display: flex; width: 648px; }
    .stacks { display: flex; width: 128px; }
    .rule { width: 2px; height: 58px; margin: 12px 12px 0 14px; background: #15324c; }
    .second { margin-left: 16px; margin-right: 13px; }
  `;
  row(items: DockItem[]) {
    return items.map((i) => html`<dock-icon .icon=${i.icon} .badge=${i.badge ?? ""} .running=${!!i.running}></dock-icon>`);
  }
  render() {
    return html`
      <div class="apps">${this.row(APPS)}</div><div class="rule"></div>
      <div class="recent">${this.row(RECENT)}</div><div class="rule second"></div>
      <div class="stacks">${this.row(STACKS)}</div>
    `;
  }
}

/* ---------- desktop ---------- */

@customElement("app-root")
class AppRoot extends LitElement {
  static styles = css`
    :host { display: block; position: relative; width: 2560px; height: 1600px; overflow: hidden; background: #04182b; }
    .wallpaper { position: absolute; inset: 0; }
    .win { position: absolute; overflow: hidden; }
    .editor { left: 6px; top: 60px; width: 2546px; height: 1436px; border-radius: 14px; background: linear-gradient(#1a1a1b 98.6%, #101011 98.7%, #2b2b2c 100%); box-shadow: 0 4px 44px 14px rgba(0, 0, 0, 0.9); color: #050505; font: 27px/30px "Inter", sans-serif; }
    .editor-status { display: flex; position: absolute; left: 81px; right: 0; bottom: 9px; white-space: nowrap; }
    .branch { margin-left: 1688px; }
    .tabsize { margin-left: 90px; }
    .far { left: -20px; top: 46px; width: 60px; height: 1428px; border-radius: 14px; background: linear-gradient(#b4b4b4, #8c8c8c 10%, #85878a 95.800%, #505a64 96%, #555e68); }
    .purple { left: 4px; top: 130px; width: 40px; height: 1290px; border-radius: 8px; background: #280321; }
    .ledge { left: 18px; top: 60px; width: 2524px; height: 1418px; border-radius: 12px; background: #909090; }
    .corner { left: 2400px; top: 1300px; width: 148px; height: 174px; border-radius: 12px; background: #77808b; }
    .mailwin { left: 10px; top: 55px; width: 2500px; height: 1418px; box-sizing: border-box; border-radius: 14px; border-bottom: 1px solid #70706f; background: linear-gradient(90deg, rgba(0,0,0,0) 0, rgba(0,0,0,0) 8px, rgba(0,0,0,.1) 24px), linear-gradient(#efefef 0, #dedede 75px, #b8b8b8 76px, #dcdcdc 78px, #d8d8d8 125px, #b4b4b4 126px, #e4e4e4 128px, #e2e2e2 273px, #d6d3d1 274px, #d8d5d2 474px, #bfd0dd 475px, #bfd0dd 554px, #d8d5d2 555px, #d8d5d3 1395px, #b2b2b0 1406px, #acacaa 100%); }
    .message { position: absolute; left: 612px; bottom: 0; width: 714px; height: 10px; background: #b2b2b2; overflow: hidden; }
    .message span { display: block; margin: -10px 0 0 104px; font: 26.6px/40px "Open Sans", sans-serif; color: #4f4f4f; white-space: nowrap; }
    .front { left: 34px; top: 46px; width: 2520px; height: 1416px; border-radius: 11px; background: #fff; }
    .front-shadow { left: 34px; top: 46px; width: 2520px; height: 1416px; border-radius: 11px; box-shadow: 0 0 0 1px rgba(0, 0, 0, 0.3), 0 2px 6px rgba(0, 0, 0, 0.2); overflow: visible; }
    .thumb { position: absolute; left: 2390px; top: 1316px; width: 146px; height: 176px; box-sizing: border-box; padding: 8px; border-radius: 8px; background: #fff; box-shadow: 0 0 5px rgba(0, 0, 0, 0.35), 0 6px 70px rgba(0, 0, 0, 0.16); }
    .frame { box-sizing: border-box; height: 100%; border: 1px solid #9b9b9b; }
    .dock { position: absolute; left: 46px; bottom: 0; width: 2468px; }
    .bar { position: relative; }
  `;
  render() {
    return html`
      <svg class="wallpaper" width="2560" height="1600">
        <defs>
          <filter id="sea" x="0" y="0" width="100%" height="100%">
            <feTurbulence type="fractalNoise" baseFrequency="0.035 0.14" numOctaves="4" seed="7" />
            <feColorMatrix values="0 0 0 0 0.1  0 0 0 0 0.24  0 0 0 0 0.36  1.400 0 0 0 -0.6" />
          </filter>
          <linearGradient id="deep" x2="0" y2="1">
            <stop stop-color="#4b6b80" /><stop offset=".1" stop-color="#2b3f4c" /><stop offset=".7" stop-color="#0d1f2c" /><stop offset="1" stop-color="#02152a" />
          </linearGradient>
        </defs>
        <rect width="2560" height="1600" fill="url(#deep)" />
        <rect y="1200" width="2560" height="400" filter="url(#sea)" />
      </svg>
      <div class="win editor">
        <div class="editor-status"><span>Line 50, Column 1</span><span class="branch">master</span><span class="tabsize">Tab Size: 2</span></div>
      </div>
      <div class="win far"></div>
      <div class="win purple"></div>
      <div class="win corner"></div>
      <div class="win ledge"></div>
      <div class="win mailwin"><div class="message"><span>Microsoft Teams Helen has added you to the</span></div></div>
      <div class="win front-shadow"></div>
      <div class="win front"><browser-chrome></browser-chrome><casework-page></casework-page></div>
      <menu-bar class="bar"></menu-bar>
      <app-dock class="dock"></app-dock>
      <div class="thumb"><div class="frame"></div></div>
    `;
  }
}
